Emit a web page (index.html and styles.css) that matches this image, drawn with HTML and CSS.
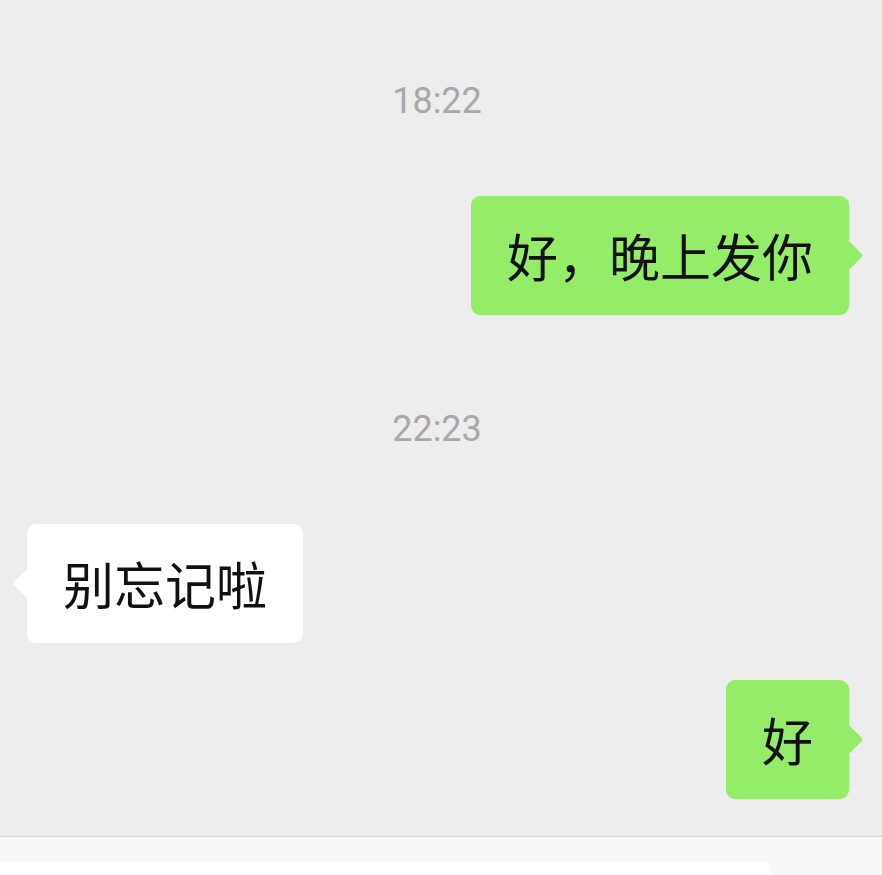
FILE: index.html
```html
<!DOCTYPE html>
<html lang="zh-CN">
<head>
  <meta charset="UTF-8">
  <title>聊天</title>
  <link rel="stylesheet" href="styles.css">
</head>
<body>
  <!-- Message list -->
  <div class="chat">
    <div class="time">18:22</div>
    <div class="msg me">
      <div class="bubble">好，晚上发你</div>
    </div>

    <div class="time">22:23</div>
    <div class="msg other">
      <div class="bubble">别忘记啦</div>
    </div>
    <div class="msg me">
      <div class="bubble">好</div>
    </div>
  </div>

  <!-- Input bar -->
  <div class="footer">
    <div class="input"></div>
  </div>
</body>
</html>
```

FILE: styles.css
```css
html, body { margin: 0; height: 100%; }
body {
  background: #ededed;
  display: flex;
  flex-direction: column;
  overflow: hidden;
  font-family: "Noto Sans CJK SC", "Noto Sans", sans-serif;
}
.chat {
  flex: 1;
  display: flex;
  flex-direction: column;
  padding-top: 81px;
}
.time {
  font-family: Roboto, "Noto Sans", sans-serif;
  font-size: 36px;
  line-height: 40px;
  color: #a8a8a8;
  text-align: center;
  padding-right: 8px;
  margin-bottom: 75px;
}
.msg + .time { margin-top: 94px; }
.msg + .msg { margin-top: 37px; }
.msg { display: flex; }
.msg.me { justify-content: flex-end; padding-right: 33px; }
.msg.other { justify-content: flex-start; padding-left: 27px; }
.bubble {
  position: relative;
  font-size: 51px;
  line-height: 55px;
  padding: 32px 36px;
  border-radius: 9px;
  color: #111;
  white-space: nowrap;
}
.me .bubble { background: #95ec69; }
.other .bubble { background: #fff; }
.bubble::after {
  content: "";
  position: absolute;
  top: calc(50% - 10.5px);
  width: 21px;
  height: 21px;
  border-radius: 2px;
  transform: rotate(45deg);
  background: inherit;
}
.me .bubble::after { right: -10px; }
.other .bubble::after { left: -10px; }
.footer {
  height: 39px;
  background: #f7f7f7;
  border-top: 1px solid #d8d8d8;
  box-sizing: border-box;
  padding-top: 25px;
}
.input {
  width: 770px;
  height: 100%;
  background: #fff;
  border-top-right-radius: 7px;
}
```
